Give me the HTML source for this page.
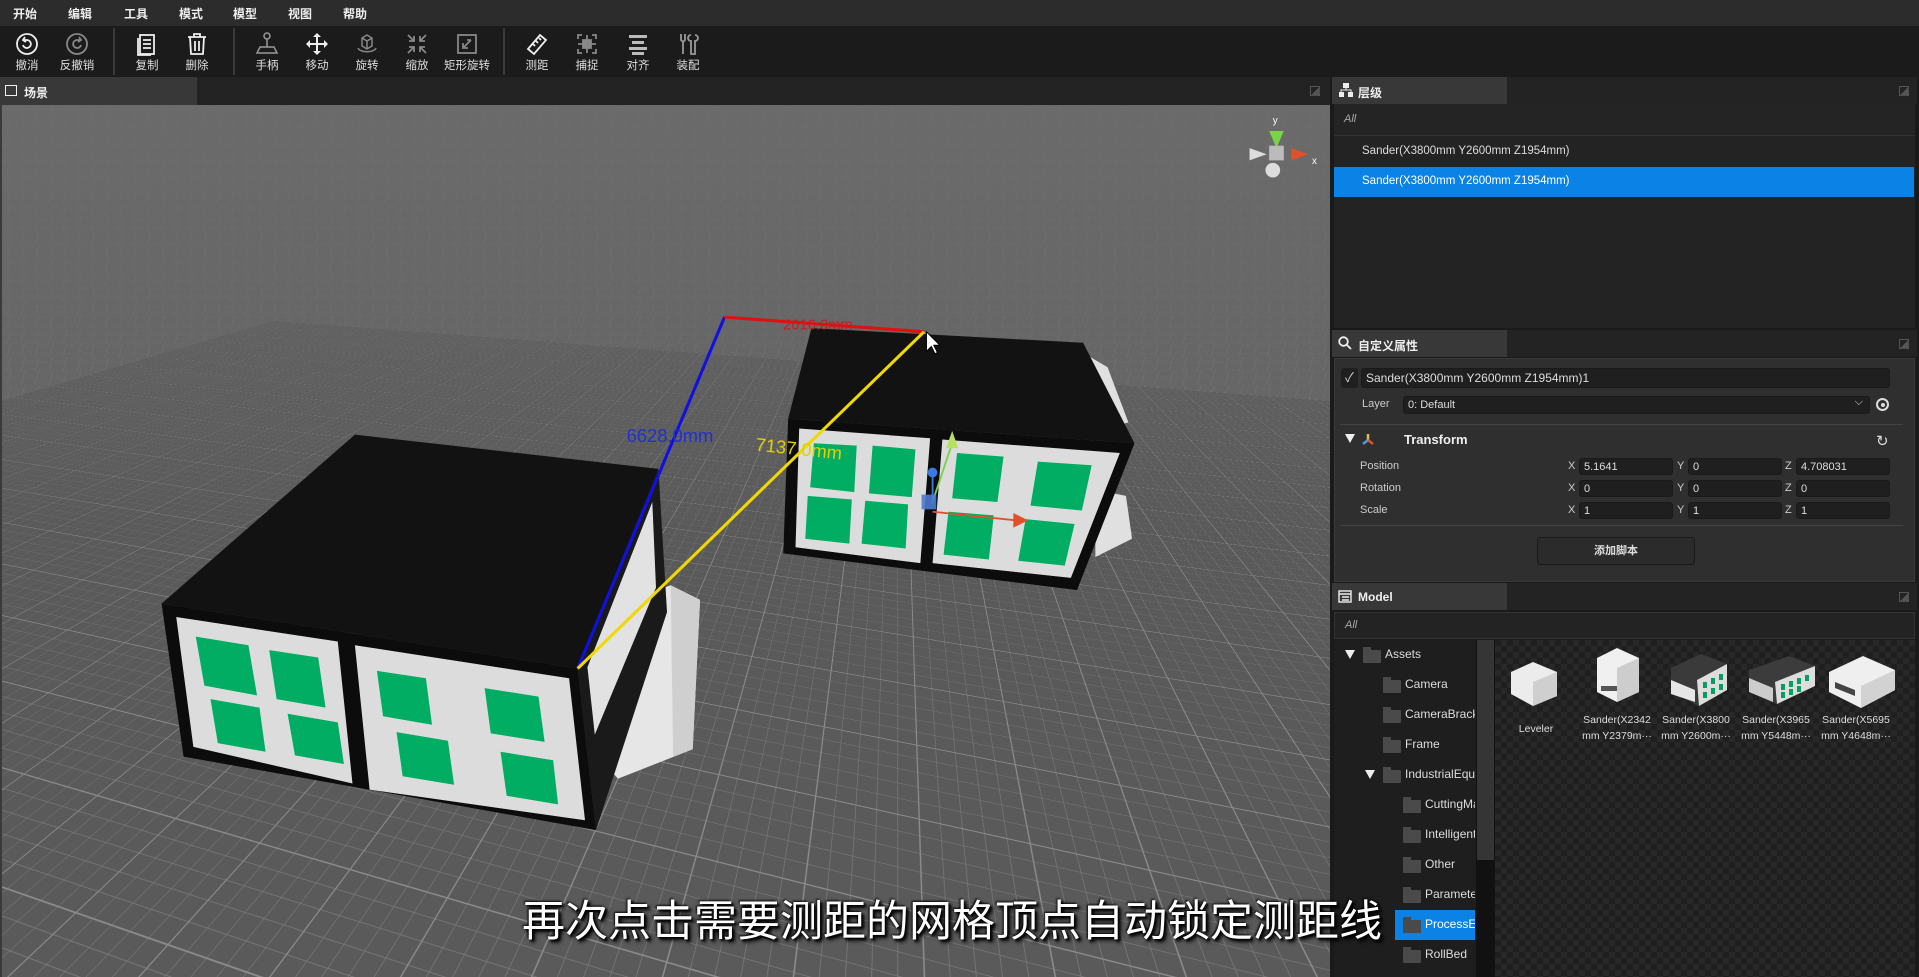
<!DOCTYPE html>
<html><head><meta charset="utf-8">
<style>
*{margin:0;padding:0;box-sizing:border-box}
html,body{width:1919px;height:977px;overflow:hidden}
body{background:#1c1c1c;font-family:"Liberation Sans","Noto Sans CJK SC",sans-serif;color:#ddd;position:relative}
.abs{position:absolute}
#menu{left:0;top:0;width:1919px;height:26px;background:#2c2c2c}
#menu span{position:absolute;top:5px;font-size:12px;font-weight:bold;color:#eee}
#tool{left:0;top:26px;width:1919px;height:51px;background:#1b1b1b}
.tb{position:absolute;top:0;width:50px;text-align:center}
.tb svg{display:block;margin:6px auto 0}
.tb span{display:block;font-size:11.5px;color:#ddd;margin-top:1px}
.sep{position:absolute;top:2px;width:2px;height:47px;background:#3a3a3a}
#scenetab{left:0;top:77px;width:1330px;height:28px;background:#232323}
#view{left:0;top:105px;width:1330px;height:872px;overflow:hidden;clip-path:inset(0 0 0 0);perspective:700px;border-left:2px solid #3a3a3a;
background-color:#666;background-image:linear-gradient(8deg,transparent 48%,#777 50%,transparent 52%),linear-gradient(-75deg,transparent 45%,#747474 50%,transparent 55%);background-size:24px 9px,14px 14px}
#plane{position:absolute;left:-2600px;top:-2000px;width:6600px;height:4300px;transform:rotateX(60deg) rotateZ(16deg);transform-origin:50% 72.09%;
background-color:#5a5a5a;
background-image:linear-gradient(#8c8c8c 2px,transparent 2px),linear-gradient(90deg,#8c8c8c 2px,transparent 2px),linear-gradient(#7a7a7a 1px,transparent 1px),linear-gradient(90deg,#7a7a7a 1px,transparent 1px);
background-size:160px 160px,160px 160px,32px 32px,32px 32px}
#fog{position:absolute;left:0;top:0;width:100%;height:100%;background:linear-gradient(rgba(108,108,108,.8) 0%,rgba(104,104,104,.55) 25%,rgba(90,90,90,0) 50%)}
.hdr{position:absolute;height:27px;background:#232323;left:1332px;width:585px}
.hdr .tab{position:absolute;left:0;top:0;width:175px;height:27px;background:#383838;font-size:12px;font-weight:bold;color:#eee;padding:7px 0 0 26px}
.ex{position:absolute;right:8px;top:9px;width:10px;height:10px;border:1px dashed #555;background:linear-gradient(135deg,transparent 50%,#555 50%)}
.fld{position:absolute;background:#1f1f1f;border:1px solid #1a1a1a;border-radius:3px;height:17px;font-size:11px;color:#ddd;padding:2px 4px}
.lbl{position:absolute;font-size:11px;color:#ccc}
.tree{position:absolute;font-size:12px;color:#ddd;white-space:nowrap}
.fo{position:absolute;width:18px;height:13px;background:#4a4a4a;border-radius:1px}
.fo:before{content:"";position:absolute;left:0;top:-3px;width:8px;height:4px;background:#4a4a4a}
.tri{position:absolute;width:0;height:0;border-left:5px solid transparent;border-right:5px solid transparent;border-top:9px solid #eee}
.th{position:absolute;width:80px;text-align:center;font-size:10.5px;color:#ddd;line-height:16px}
</style></head><body>

<div id="menu" class="abs">
<span style="left:13px">开始</span><span style="left:68px">编辑</span><span style="left:124px">工具</span><span style="left:179px">模式</span><span style="left:233px">模型</span><span style="left:288px">视图</span><span style="left:343px">帮助</span>
</div>

<div id="tool" class="abs">
<div class="tb" style="left:2px"><svg width="24" height="24" viewBox="0 0 24 24" fill="none" stroke="#eee" stroke-width="1.8"><circle cx="12" cy="12" r="10"/><path d="M8 13a4 4 0 1 0 4-5h-3M10 5l-2 3 3 2"/></svg><span>撤消</span></div>
<div class="tb" style="left:52px"><svg width="24" height="24" viewBox="0 0 24 24" fill="none" stroke="#888" stroke-width="1.8"><circle cx="12" cy="12" r="10"/><path d="M16 13a4 4 0 1 1-4-5h3M14 5l2 3-3 2"/></svg><span>反撤销</span></div>
<div class="sep" style="left:113px"></div>
<div class="tb" style="left:122px"><svg width="24" height="24" viewBox="0 0 24 24" fill="none" stroke="#eee" stroke-width="1.8"><rect x="5" y="3" width="14" height="19"/><path d="M8 8h8M8 12h8M8 16h8M3 6v17h13"/></svg><span>复制</span></div>
<div class="tb" style="left:172px"><svg width="24" height="24" viewBox="0 0 24 24" fill="none" stroke="#eee" stroke-width="1.8"><path d="M3 5h18M9 5V2h6v3M5 5l1 17h12l1-17M10 9v10M14 9v10"/></svg><span>删除</span></div>
<div class="sep" style="left:233px"></div>
<div class="tb" style="left:242px"><svg width="24" height="24" viewBox="0 0 24 24" fill="none" stroke="#999" stroke-width="1.5"><circle cx="12" cy="4" r="3"/><path d="M12 7v8M5 15h14l3 6H2z"/></svg><span>手柄</span></div>
<div class="tb" style="left:292px"><svg width="24" height="24" viewBox="0 0 24 24" fill="#eee"><path d="M12 1l4 4h-3v6h6V8l4 4-4 4v-3h-6v6h3l-4 4-4-4h3v-6H5v3l-4-4 4-4v3h6V5H8z"/></svg><span>移动</span></div>
<div class="tb" style="left:342px"><svg width="24" height="24" viewBox="0 0 24 24" fill="none" stroke="#888" stroke-width="1.5"><path d="M7 6l5-3 5 3v8l-5 3-5-3zM12 9v8M7 6l5 3 5-3"/><path d="M3 16c2 5 16 5 18 0"/></svg><span>旋转</span></div>
<div class="tb" style="left:392px"><svg width="24" height="24" viewBox="0 0 24 24" fill="none" stroke="#888" stroke-width="1.8"><path d="M3 3l6 6M9 4v5H4M21 3l-6 6M15 4v5h5M3 21l6-6M4 15h5v5M21 21l-6-6M20 15h-5v5"/></svg><span>缩放</span></div>
<div class="tb" style="left:442px"><svg width="24" height="24" viewBox="0 0 24 24" fill="none" stroke="#888" stroke-width="1.8"><rect x="3" y="3" width="18" height="18"/><path d="M8 16l8-8M8 11v5h5M16 8h-4"/></svg><span>矩形旋转</span></div>
<div class="sep" style="left:503px"></div>
<div class="tb" style="left:512px"><svg width="24" height="24" viewBox="0 0 24 24" fill="none" stroke="#eee" stroke-width="1.8"><path d="M3 17L15 3l6 5L9 22z M8 12l2 2M11 9l2 2M14 6l2 2"/></svg><span>测距</span></div>
<div class="tb" style="left:562px"><svg width="24" height="24" viewBox="0 0 24 24" fill="none" stroke="#888" stroke-width="1.8"><path d="M3 7V3h4M17 3h4v4M21 17v4h-4M7 21H3v-4M12 3v18M3 12h18"/><rect x="8" y="8" width="8" height="8" fill="#888"/></svg><span>捕捉</span></div>
<div class="tb" style="left:613px"><svg width="24" height="24" viewBox="0 0 24 24" fill="#bbb"><rect x="3" y="3" width="18" height="3"/><rect x="6" y="9" width="12" height="3"/><rect x="3" y="15" width="18" height="3"/><rect x="6" y="20" width="12" height="3"/></svg><span>对齐</span></div>
<div class="tb" style="left:663px"><svg width="24" height="24" viewBox="0 0 24 24" fill="none" stroke="#999" stroke-width="1.8"><path d="M5 2v6l2 2v12M9 2v6L7 10M15 3a3 3 0 0 0 0 6v13h4V9a3 3 0 0 0 0-6"/></svg><span>装配</span></div>
</div>

<div id="scenetab" class="abs"><div style="position:absolute;left:0;top:0;width:197px;height:28px;background:#383838;font-size:12px;font-weight:bold;color:#eee;padding:7px 0 0 24px">场景</div>
<div style="position:absolute;left:5px;top:8px;width:12px;height:11px;border:1.5px solid #eee"></div><div class="ex" style="left:1310px"></div></div>

<div id="view" class="abs"><div id="plane"></div><div id="fog"></div></div>

<svg class="abs" style="left:0;top:0" width="1919" height="977" viewBox="0 0 1568 798" preserveAspectRatio="none">
<polygon points="495,498 548,478 572,490 566,612 505,636 490,620" fill="#e6e6e6"/>
<polygon points="548,478 572,490 566,612 550,618" fill="#cfcfcf"/>
<polygon points="472,546 538,383 545,500 487,678" fill="#1a1a1a"/>
<polygon points="480,545 533,410 536,480 486,600" fill="#e2e2e2"/>
<polygon points="132,493 290,355 538,383 472,546" fill="#121212"/>
<polygon points="132,493 472,546 487,678 150,618" fill="#0c0c0c"/>
<polygon points="144,504 276,524 288,640 158,610" fill="#dcdcdc"/>
<polygon points="290,527 465,554 478,670 302,645" fill="#dcdcdc"/>
<g fill="#00ad62">
<polygon points="160,520 203,527 210,568 167,560"/><polygon points="220,531 260,537 266,578 226,571"/>
<polygon points="172,571 212,578 217,614 178,607"/><polygon points="235,583 276,590 281,624 241,617"/>
<polygon points="308,548 348,554 353,592 313,585"/><polygon points="396,562 440,569 445,606 401,599"/>
<polygon points="324,598 366,605 371,641 329,634"/><polygon points="409,614 452,621 456,657 414,650"/>
</g>
<polygon points="888,290 905,300 922,345 905,350" fill="#e0e0e0"/>
<polygon points="895,400 920,405 925,440 895,455" fill="#e0e0e0"/>
<polygon points="663,268 885,280 927,362 644,342" fill="#121212"/>
<polygon points="644,342 927,362 880,482 640,452" fill="#0c0c0c"/>
<polygon points="653,350 760,358 752,460 650,447" fill="#dcdcdc"/>
<polygon points="770,359 915,370 875,472 762,460" fill="#dcdcdc"/>
<g fill="#00ad62">
<polygon points="665,362 700,364 698,402 662,398"/><polygon points="713,364 748,367 745,406 710,403"/>
<polygon points="660,405 696,408 694,444 658,440"/><polygon points="707,409 742,412 740,448 704,444"/>
<polygon points="782,370 820,373 815,410 778,407"/><polygon points="848,377 892,380 884,417 842,413"/>
<polygon points="775,418 812,421 808,457 771,453"/><polygon points="838,424 878,428 870,462 832,458"/>
</g>
<line x1="762" y1="410" x2="778" y2="362" stroke="#7bd34a" stroke-width="1.5"/><polygon points="773,366 783,366 778,352" fill="#b8e060"/>
<line x1="762" y1="418" x2="830" y2="425" stroke="#e0502a" stroke-width="1.5"/><polygon points="828,419 828,431 840,425" fill="#e0502a"/>
<line x1="762" y1="388" x2="762" y2="412" stroke="#3a7ae0" stroke-width="1.5"/><circle cx="762" cy="386" r="4" fill="#3a7ae0"/>
<rect x="753" y="404" width="12" height="12" fill="#4a7ad0" opacity=".9"/>
<line x1="592" y1="259" x2="472" y2="546" stroke="#1010e0" stroke-width="2.5"/>
<line x1="592" y1="259" x2="755" y2="271" stroke="#e01010" stroke-width="2.5"/>
<line x1="755" y1="271" x2="472" y2="546" stroke="#f0d800" stroke-width="2.5"/>
<text x="512" y="361" font-family="Liberation Sans" font-size="15" fill="#2030d0">6628.0mm</text>
<text x="617" y="368" font-family="Liberation Sans" font-size="15" fill="#e0d000" transform="rotate(6 617 368)">7137.0mm</text>
<text x="640" y="269" font-family="Liberation Sans" font-size="12" fill="#c02020">2016.0mm</text>
<path d="M757 271v16l4-4 3 6 2-1-3-6h5z" fill="#fff" stroke="#000" stroke-width=".8"/>
<g transform="translate(1043,125)">
<polygon points="-6,-18 6,-18 0,-4" fill="#7bd34a"/><polygon points="12,-4 12,6 26,1" fill="#e0502a"/>
<polygon points="-22,-4 -22,6 -8,1" fill="#ddd"/><circle cx="-3" cy="14" r="6" fill="#ddd"/><rect x="-6" y="-6" width="12" height="12" fill="#bbb"/>
<text x="-3" y="-24" font-size="8" fill="#fff" font-family="Liberation Sans">y</text><text x="29" y="9" font-size="8" fill="#fff" font-family="Liberation Sans">x</text>
</g>
</svg>

<div class="abs" style="left:1330px;top:77px;width:589px;height:900px;background:#1a1a1a"></div>
<div class="hdr" style="top:77px"><div class="tab">层级</div><div class="ex"></div></div>
<svg class="abs" style="left:1339px;top:83px" width="14" height="14" viewBox="0 0 14 14" fill="#eee"><rect x="4" y="0" width="6" height="5"/><rect x="0" y="9" width="5" height="5"/><rect x="9" y="9" width="5" height="5"/><path d="M7 5v2M2 9V7h10v2" stroke="#eee" fill="none"/></svg>
<div class="abs" style="left:1334px;top:104px;width:581px;height:224px;background:#232323"></div>
<div class="abs" style="left:1334px;top:104px;width:581px;height:32px;background:#242424;border-bottom:1px solid #333;font-size:11px;font-style:italic;color:#aaa;padding:9px 10px">All</div>
<div class="abs" style="left:1362px;top:145px;font-size:11.5px;color:#ddd">Sander(X3800mm Y2600mm Z1954mm)</div>
<div class="abs" style="left:1334px;top:167px;width:580px;height:30px;background:#0a82e6;font-size:11.5px;color:#fff;padding:8px 0 0 28px">Sander(X3800mm Y2600mm Z1954mm)</div>

<div class="hdr" style="top:330px"><div class="tab">自定义属性</div><div class="ex"></div></div>
<svg class="abs" style="left:1338px;top:336px" width="14" height="14" viewBox="0 0 14 14" fill="none" stroke="#eee" stroke-width="1.8"><circle cx="5.5" cy="5.5" r="4.3"/><path d="M8.5 8.5L13 13"/></svg>
<div class="abs" style="left:1334px;top:358px;width:581px;height:224px;background:#2f2f2f;border:1px solid #3a3a3a"></div>
<div class="abs" style="left:1341px;top:368px;width:17px;height:20px;background:#1f1f1f;border-radius:3px;color:#ccc;font-size:13px;text-align:center;line-height:20px">✓</div>
<div class="fld" style="left:1361px;top:368px;width:529px;height:20px;font-size:12px">Sander(X3800mm Y2600mm Z1954mm)1</div>
<div class="lbl" style="left:1362px;top:398px">Layer</div>
<div class="fld" style="left:1403px;top:396px;width:467px;height:18px">0: Default<span style="position:absolute;right:6px;top:-1px;font-size:11px">⌵</span></div>
<div class="abs" style="left:1876px;top:398px;width:13px;height:13px;border:2px solid #ddd;border-radius:50%"><div style="margin:2.5px;width:4px;height:4px;background:#ddd;border-radius:50%"></div></div>
<div class="abs" style="left:1340px;top:424px;width:563px;height:1px;background:#444"></div>
<div class="tri" style="left:1345px;top:434px"></div>
<svg class="abs" style="left:1361px;top:432px" width="14" height="14"><path d="M7 2v6" stroke="#e0c040" stroke-width="2.5"/><path d="M7 8l-5 4" stroke="#40a0e0" stroke-width="2.5"/><path d="M7 8l5 4" stroke="#e05030" stroke-width="2.5"/></svg>
<div class="abs" style="left:1404px;top:432px;font-size:13px;font-weight:bold;color:#eee">Transform</div>
<div class="abs" style="left:1876px;top:432px;font-size:15px;color:#ddd">↻</div>
<div class="lbl" style="left:1360px;top:460px">Position</div><div class="lbl" style="left:1360px;top:482px">Rotation</div><div class="lbl" style="left:1360px;top:504px">Scale</div>
<div class="lbl" style="left:1568px;top:460px">X</div><div class="fld" style="left:1579px;top:458px;width:94px">5.1641</div>
<div class="lbl" style="left:1677px;top:460px">Y</div><div class="fld" style="left:1688px;top:458px;width:94px">0</div>
<div class="lbl" style="left:1785px;top:460px">Z</div><div class="fld" style="left:1796px;top:458px;width:94px">4.708031</div>
<div class="lbl" style="left:1568px;top:482px">X</div><div class="fld" style="left:1579px;top:480px;width:94px">0</div>
<div class="lbl" style="left:1677px;top:482px">Y</div><div class="fld" style="left:1688px;top:480px;width:94px">0</div>
<div class="lbl" style="left:1785px;top:482px">Z</div><div class="fld" style="left:1796px;top:480px;width:94px">0</div>
<div class="lbl" style="left:1568px;top:504px">X</div><div class="fld" style="left:1579px;top:502px;width:94px">1</div>
<div class="lbl" style="left:1677px;top:504px">Y</div><div class="fld" style="left:1688px;top:502px;width:94px">1</div>
<div class="lbl" style="left:1785px;top:504px">Z</div><div class="fld" style="left:1796px;top:502px;width:94px">1</div>
<div class="abs" style="left:1340px;top:525px;width:563px;height:1px;background:#444"></div>
<div class="abs" style="left:1537px;top:537px;width:158px;height:28px;background:#2b2b2b;border:1px solid #1a1a1a;border-radius:3px;font-size:11px;font-weight:bold;text-align:center;line-height:26px;color:#ddd">添加脚本</div>

<div class="hdr" style="top:583px"><div class="tab">Model</div><div class="ex"></div></div>
<svg class="abs" style="left:1338px;top:590px" width="14" height="13" fill="none" stroke="#eee" stroke-width="1.4"><rect x="1" y="1" width="12" height="11"/><path d="M1 4h12M4 7h7M4 10h7"/></svg>
<div class="abs" style="left:1334px;top:612px;width:581px;height:27px;background:#232323;border:1px solid #333;font-size:11px;font-style:italic;color:#aaa;padding:6px 10px">All</div>
<div class="abs" style="left:1334px;top:640px;width:142px;height:337px;background:#1e1e1e"></div>
<div class="abs" style="left:1476px;top:640px;width:19px;height:337px;background:#111"></div>
<div class="abs" style="left:1477px;top:640px;width:17px;height:220px;background:#353535"></div>
<div class="abs" style="left:1495px;top:640px;width:420px;height:337px;background-color:#1f1f1f;background-image:linear-gradient(45deg,#282828 25%,transparent 25%,transparent 75%,#282828 75%),linear-gradient(45deg,#282828 25%,transparent 25%,transparent 75%,#282828 75%);background-size:12px 12px;background-position:0 0,6px 6px"></div>
<div class="abs" style="left:1395px;top:910px;width:80px;height:30px;background:#0a82e6"></div>
<div class="abs" style="left:1334px;top:640px;width:141px;height:337px;overflow:hidden">
<div class="tri" style="left:11px;top:10px"></div><div class="fo" style="left:29px;top:10px"></div><div class="tree" style="left:51px;top:7px">Assets</div>
<div class="fo" style="left:49px;top:40px"></div><div class="tree" style="left:71px;top:37px">Camera</div>
<div class="fo" style="left:49px;top:70px"></div><div class="tree" style="left:71px;top:67px">CameraBracket</div>
<div class="fo" style="left:49px;top:100px"></div><div class="tree" style="left:71px;top:97px">Frame</div>
<div class="tri" style="left:31px;top:130px"></div><div class="fo" style="left:49px;top:130px"></div><div class="tree" style="left:71px;top:127px">IndustrialEquipment</div>
<div class="fo" style="left:69px;top:160px"></div><div class="tree" style="left:91px;top:157px">CuttingMachine</div>
<div class="fo" style="left:69px;top:190px"></div><div class="tree" style="left:91px;top:187px">Intelligent</div>
<div class="fo" style="left:69px;top:220px"></div><div class="tree" style="left:91px;top:217px">Other</div>
<div class="fo" style="left:69px;top:250px"></div><div class="tree" style="left:91px;top:247px">Parameter</div>
<div class="fo" style="left:69px;top:280px"></div><div class="tree" style="left:91px;top:277px;color:#fff">ProcessEquip</div>
<div class="fo" style="left:69px;top:310px"></div><div class="tree" style="left:91px;top:307px">RollBed</div>
</div>
<svg class="abs" style="left:1495px;top:640px" width="420" height="80" viewBox="0 0 420 80">
<g transform="translate(16,18)"><polygon points="0,14 22,4 46,14 46,38 22,48 0,36" fill="#ececec"/><polygon points="22,24 46,14 46,38 22,48" fill="#cfcfcf"/></g>
<g transform="translate(98,8)"><polygon points="4,10 24,0 46,10 46,44 24,54 4,44" fill="#f0f0f0"/><polygon points="24,20 46,10 46,44 24,54" fill="#cdcdcd"/><rect x="8" y="38" width="16" height="5" fill="#555"/></g>
<g transform="translate(176,12)"><polygon points="0,16 30,2 56,12 56,38 28,54 0,40" fill="#3a3a3a"/><polygon points="26,28 56,12 56,38 28,54" fill="#ddd"/><g fill="#00a060"><rect x="32" y="30" width="4" height="6"/><rect x="40" y="26" width="4" height="6"/><rect x="48" y="22" width="4" height="6"/><rect x="32" y="40" width="4" height="6"/><rect x="40" y="36" width="4" height="6"/><rect x="48" y="32" width="4" height="6"/></g><polygon points="0,28 24,38 24,50 0,42" fill="#e6e6e6"/></g>
<g transform="translate(254,14)"><polygon points="0,16 40,2 66,12 66,32 28,50 0,38" fill="#3c3c3c"/><polygon points="26,28 66,12 66,32 28,50" fill="#ddd"/><g fill="#00a060"><rect x="32" y="30" width="4" height="6"/><rect x="40" y="27" width="4" height="6"/><rect x="48" y="24" width="4" height="6"/><rect x="56" y="21" width="4" height="6"/><rect x="32" y="38" width="4" height="6"/><rect x="40" y="35" width="4" height="6"/><rect x="48" y="32" width="4" height="6"/></g><polygon points="0,24 24,34 24,48 0,38" fill="#ccc"/></g>
<g transform="translate(334,12)"><polygon points="0,20 34,4 66,18 66,38 32,56 0,40" fill="#efefef"/><polygon points="32,34 66,18 66,38 32,56" fill="#d2d2d2"/><polygon points="6,30 26,38 26,44 6,36" fill="#444"/></g>
</svg>
<div class="th" style="left:1496px;top:721px">Leveler</div>
<div class="th" style="left:1577px;top:712px">Sander(X2342<br>mm Y2379m···</div>
<div class="th" style="left:1656px;top:712px">Sander(X3800<br>mm Y2600m···</div>
<div class="th" style="left:1736px;top:712px">Sander(X3965<br>mm Y5448m···</div>
<div class="th" style="left:1816px;top:712px">Sander(X5695<br>mm Y4648m···</div>

<div class="abs" style="left:522px;top:888px;font-size:43px;line-height:60px;color:#fff;white-space:nowrap;font-family:'Noto Sans CJK SC',sans-serif;text-shadow:2px 2px 2px #000,-1px -1px 2px #000,3px 3px 4px #000">再次点击需要测距的网格顶点自动锁定测距线</div>
</body></html>
